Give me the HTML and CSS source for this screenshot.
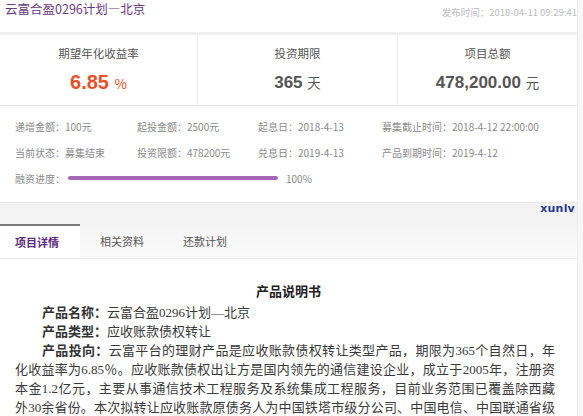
FILE: index.html
```html
<!DOCTYPE html>
<html lang="zh-CN">
<head>
<meta charset="utf-8">
<title>云富合盈0296计划—北京</title>
<link rel="stylesheet" href="styles.css">
</head>
<body>
<div class="page">
  <header class="top">
    <h1 class="title">云富合盈0296计划—北京</h1>
    <span class="pubtime">发布时间：2018-04-11 09:29:41</span>
  </header>
  <div class="sep"></div>
  <section class="stats">
    <div class="stat">
      <div class="stat-label">期望年化收益率</div>
      <div class="stat-value rate">6.85 <span class="unit">%</span></div>
    </div>
    <div class="stat">
      <div class="stat-label">投资期限</div>
      <div class="stat-value">365 <span class="unit">天</span></div>
    </div>
    <div class="stat">
      <div class="stat-label">项目总额</div>
      <div class="stat-value">478,200.00 <span class="unit">元</span></div>
    </div>
  </section>
  <section class="info">
    <div class="info-row">
      <span>递增金额：100元</span>
      <span>起投金额：2500元</span>
      <span>起息日：2018-4-13</span>
      <span>募集截止时间：2018-4-12 22:00:00</span>
    </div>
    <div class="info-row">
      <span>当前状态：募集结束</span>
      <span>投资限额：478200元</span>
      <span>兑息日：2019-4-13</span>
      <span>产品到期时间：2019-4-12</span>
    </div>
    <div class="progress-row">
      <span>融资进度：</span>
      <div class="bar"><div class="bar-fill" style="width:100%"></div></div>
      <span class="pct">100%</span>
    </div>
  </section>
  <div class="band">
    <span class="mark">xunlv</span>
  </div>
  <nav class="tabs">
    <span class="tab active">项目详情</span>
    <span class="tab">相关资料</span>
    <span class="tab">还款计划</span>
  </nav>
  <article class="content">
    <h2 class="doc-title">产品说明书</h2>
    <p class="line"><b>产品名称：</b>云富合盈0296计划—北京</p>
    <p class="line"><b>产品类型：</b>应收账款债权转让</p>
    <div class="para">
      <span class="pl first"><b>产品投向：</b>云富平台的理财产品是应收账款债权转让类型产品，期限为365个自然日，年</span>
      <span class="pl">化收益率为6.85％。应收账款债权出让方是国内领先的通信建设企业，成立于2005年，注册资</span>
      <span class="pl">本金1.2亿元，主要从事通信技术工程服务及系统集成工程服务，目前业务范围已覆盖除西藏</span>
      <span class="pl">外30余省份。本次拟转让应收账款原债务人为中国铁塔市级分公司、中国电信、中国联通省级</span>
    </div>
  </article>
</div>
</body>
</html>
```

FILE: styles.css
```css
* { box-sizing: border-box; }
html, body { margin: 0; padding: 0; }
body {
  background: #f7f7f7;
  font-family: "Noto Sans CJK SC", "Liberation Sans", sans-serif;
  color: #555;
  width: 583px;
  height: 416px;
  overflow: hidden;
}
.page {
  width: 578px;
  background: #fff;
  border-right: 1px solid #ececec;
  min-height: 416px;
}
.top {
  display: flex;
  justify-content: space-between;
  align-items: flex-start;
  height: 32px;
  padding: 0 0 0 5px;
}
.title {
  margin: 0;
  font-size: 12.5px;
  line-height: 17px;
  font-weight: normal;
  color: #6a3a84;
}
.pubtime {
  font-size: 9.5px;
  line-height: 14px;
  margin-top: 5px;
  color: #bdbdbd;
}
.sep {
  height: 3px;
  background: #efefef;
}
.stats {
  display: grid;
  grid-template-columns: 197px 200px 1fr;
  height: 71px;
  border-bottom: 1px solid #e6e6e6;
  box-shadow: 0 1px 2px rgba(0,0,0,0.04);
}
.stat {
  text-align: center;
  padding-top: 10px;
}
.stat + .stat { border-left: 1px solid #f0f0f0; }
.stat-label {
  font-size: 11.5px;
  line-height: 16px;
  color: #555;
}
.stat-value {
  margin-top: 9px;
  font-family: "Liberation Sans", "Noto Sans CJK SC", sans-serif;
  font-size: 17px;
  line-height: 24px;
  font-weight: bold;
  color: #555;
}
.stat-value.rate {
  font-size: 20px;
  color: #e8502a;
}
.unit {
  font-family: "Noto Sans CJK SC", sans-serif;
  font-size: 13.5px;
  font-weight: normal;
}
.info {
  padding: 7px 0 0 15px;
  height: 97px;
  border-bottom: 1px solid #e9e9e9;
  font-size: 10px;
  color: #8a8a8a;
}
.info-row {
  display: grid;
  grid-template-columns: 122px 121px 124px 1fr;
  height: 26px;
  align-items: center;
  white-space: nowrap;
}
.progress-row {
  display: flex;
  align-items: center;
  height: 26px;
}
.bar {
  width: 210px;
  height: 4px;
  margin-left: 3px;
  border-radius: 2px;
  background: #eee;
}
.bar-fill {
  height: 4px;
  border-radius: 2px;
  background: #a468b5;
}
.pct { margin-left: 8px; }
.band {
  position: relative;
  height: 21px;
  background: #f3f3f3;
}
.mark {
  position: absolute;
  right: 2px;
  top: -1px;
  font-family: "DejaVu Sans", sans-serif;
  font-size: 11px;
  font-weight: bold;
  color: #2a3a92;
  letter-spacing: 0.2px;
}
.tabs {
  display: flex;
  height: 35px;
  background: linear-gradient(#f5f5f5, #fafafa);
  border-bottom: 1px solid #ebebeb;
}
.tab {
  display: flex;
  align-items: center;
  font-size: 11px;
  color: #555;
  padding: 0 19px 0 20px;
}
.tab.active {
  width: 80px;
  padding: 0 0 0 15px;
  background: #fff;
  border-top: 2px solid #7a7a7a;
  color: #5c2a82;
  font-weight: bold;
}
.content {
  padding: 23px 0 0 15px;
  font-family: "Liberation Serif", "Noto Sans CJK SC", serif;
  color: #3a3a3a;
  font-size: 13px;
}
.doc-title {
  margin: 0 0 2px 0;
  font-size: 13px;
  line-height: 19px;
  font-weight: bold;
  text-align: center;
  padding-right: 15px;
  color: #222;
}
.line {
  margin: 0;
  padding-left: 27px;
  line-height: 19px;
}
.line b, .pl b { font-weight: 600; color: #333; }
.para { width: 540px; }
.pl {
  display: block;
  line-height: 19px;
  white-space: nowrap;
  text-align: justify;
  text-align-last: justify;
}
.pl.first { padding-left: 27px; }
```
